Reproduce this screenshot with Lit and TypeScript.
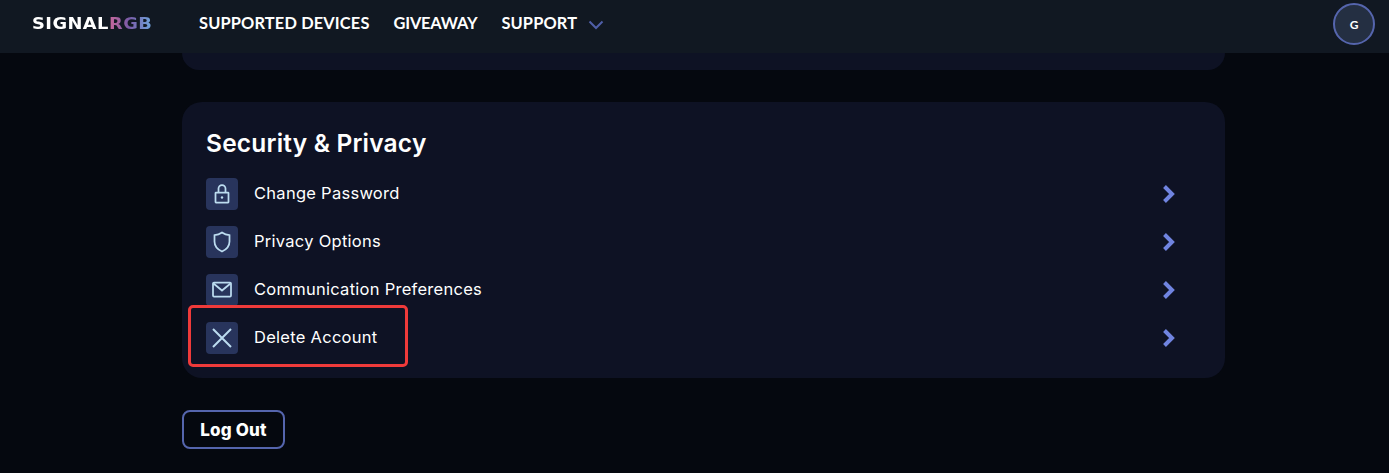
import { LitElement, html, css, svg } from "lit";
import { customElement } from "lit/decorators.js";

const icons = {
  lock: svg`<rect x="9.500" y="14.500" width="13" height="10" rx="0.500"/><path d="M12.500 14.500v-4a3.500 3.500 0 0 1 7 0v4"/><circle cx="16" cy="19.500" r="1.200" fill="currentColor" stroke="none"/>`,
  shield: svg`<path d="M16 6.500c2.400 1.700 4.800 2.500 7.500 2.700v6.300c0 4.800-3 8-7.500 10-4.500-2-7.500-5.200-7.500-10V9.200c2.700-.2 5.100-1 7.500-2.700z"/>`,
  mail: svg`<rect x="7" y="8.500" width="18" height="14" rx="1"/><path d="M7.500 9.500 16 16.500l8.500-7"/>`,
  x: svg`<path stroke-width="2" d="M7 7l18 18M25 7 7 25"/>`,
};

const rows: [keyof typeof icons, string][] = [
  ["lock", "Change Password"],
  ["shield", "Privacy Options"],
  ["mail", "Communication Preferences"],
  ["x", "Delete Account"],
];

@customElement("app-root")
export class AppRoot extends LitElement {
  static styles = css`
    :host {
      display: block;
      height: 473px;
      overflow: hidden;
      background: #05080f;
      font-family: "Inter", "Noto Sans", sans-serif;
      color: #fff;
      position: relative;
    }
    .header {
      height: 53px;
      background: #111822;
      display: flex;
      align-items: flex-start;
      padding: 0 14px 0 32px;
      box-sizing: border-box;
    }
    .logo {
      font-family: "DejaVu Sans", sans-serif;
      font-weight: 700;
      font-size: 15.500px;
      letter-spacing: 0.400px;
      width: 167px;
      flex: none;
      white-space: nowrap;
      line-height: 18px;
      margin-top: 15px;
      transform: scaleX(1.150);
      transform-origin: left center;
    }
    .rgb {
      background: linear-gradient(90deg, #c8689c, #7a5aa6 45%, #6ea8e0);
      -webkit-background-clip: text;
      background-clip: text;
      color: transparent;
    }
    .nav {
      display: flex;
      align-items: center;
      gap: 24px;
      font-family: "Lato", sans-serif;
      font-weight: 700;
      font-size: 16.400px;
      letter-spacing: 0.150px;
      flex: 1;
      height: 45px;
    }
    .tight { letter-spacing: -0.200px; }
    .chev { margin-left: -13px; margin-top: 5px; color: #4f5ea8; display: block; }
    .avatar {
      width: 42px;
      height: 42px;
      box-sizing: border-box;
      border-radius: 50%;
      border: 2px solid #5565ad;
      background: #242f42;
      display: flex;
      align-items: center;
      justify-content: center;
      font-family: "Lato", sans-serif;
      font-weight: 700;
      font-size: 12px;
      margin-top: 3px;
    }
    .main {
      padding: 0 164px 0 182px;
      height: 420px;
    }
    .stub {
      height: 17px;
      background: #0e1224;
      border-radius: 0 0 20px 20px;
      margin-bottom: 32px;
    }
    .card {
      height: 276px;
      box-sizing: border-box;
      background: #0e1224;
      border-radius: 20px;
      padding: 24px 24px 0;
    }
    h2 {
      margin: 0 0 18px;
      font-size: 24.500px;
      line-height: 34px;
      font-weight: 600;
      letter-spacing: 0.200px;
    }
    .rows { display: flex; flex-direction: column; gap: 16px; }
    .row {
      height: 32px;
      display: flex;
      align-items: center;
      gap: 16px;
      font-size: 16.500px;
      padding-right: 25px;
    }
    .ic {
      width: 32px;
      height: 32px;
      border-radius: 4px;
      background: #28345c;
      color: #bcdcf0;
      flex: none;
    }
    .ic svg { display: block; fill: none; stroke: currentColor; stroke-width: 1.750; }
    .label { flex: 1; letter-spacing: 0.270px; padding-bottom: 2px; }
    .arrow { color: #7084e0; display: block; flex: none; }
    .logout {
      margin-top: 32px;
      width: 103px;
      height: 39px;
      box-sizing: border-box;
      border: 2px solid #5565ad;
      border-radius: 8px;
      background: transparent;
      color: #fff;
      font: 800 17px "Inter", sans-serif;
      letter-spacing: 0.200px;
      padding: 0;
    }
    .mark {
      position: absolute;
      left: 188px;
      top: 305px;
      width: 220px;
      height: 62px;
      box-sizing: border-box;
      border: 3px solid #ef3a3a;
      border-radius: 5px;
    }
  `;

  render() {
    return html`
      <div class="header">
        <div class="logo">SIGNAL<span class="rgb">RGB</span></div>
        <div class="nav">
          <span>SUPPORTED DEVICES</span>
          <span class="tight">GIVEAWAY</span>
          <span>SUPPORT</span>
          <svg class="chev" width="16" height="10" viewBox="0 0 16 10" fill="none" stroke="currentColor" stroke-width="2"><path d="M1.500 1.500 8 8l6.500-6.500"/></svg>
        </div>
        <div class="avatar">G</div>
      </div>
      <div class="main">
        <div class="stub"></div>
        <section class="card">
          <h2>Security &amp; Privacy</h2>
          <div class="rows">
            ${rows.map(
              ([icon, text]) => html`
                <div class="row">
                  <div class="ic"><svg width="32" height="32" viewBox="0 0 32 32">${icons[icon]}</svg></div>
                  <span class="label">${text}</span>
                  <svg class="arrow" width="14" height="20" viewBox="0 0 14 20" fill="none" stroke="currentColor" stroke-width="4"><path d="M2.500 2.500 10 10l-7.500 7.500"/></svg>
                </div>
              `
            )}
          </div>
        </section>
        <button class="logout">Log Out</button>
      </div>
      <div class="mark"></div>
    `;
  }
}
